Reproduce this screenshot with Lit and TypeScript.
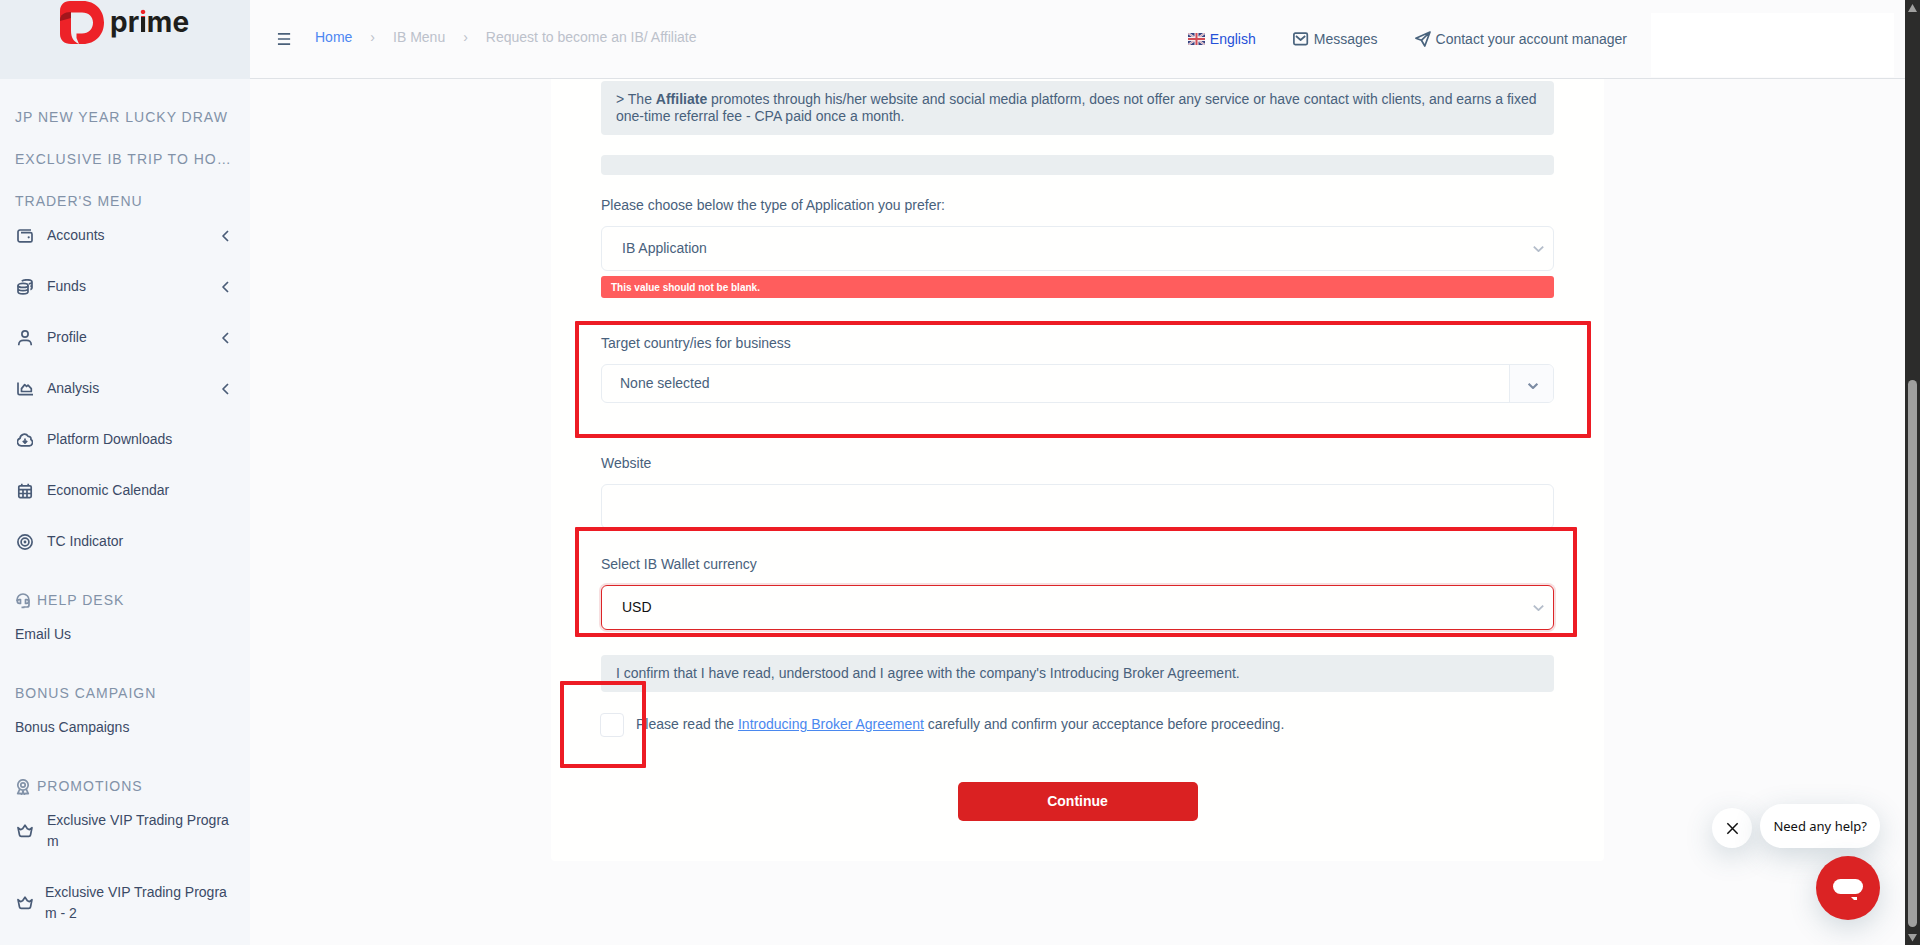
import { LitElement, html, css, svg, nothing } from "lit";
import { customElement, property, state } from "lit/decorators.js";
import { classMap } from "lit/directives/class-map.js";

const ICONS: Record<string, unknown> = {
  wallet: svg`<path d="M14 2H3A1.900 1.900 0 0 0 1 4v8a1.900 1.900 0 0 0 2 1.900h10.500a1.500 1.500 0 0 0 1.500-1.500V6.200a1.500 1.500 0 0 0-1.500-1.500H4"/><circle cx="11.700" cy="9.300" r="1.100" fill="currentColor" stroke="none"/>`,
  coins: svg`<ellipse cx="6" cy="6.400" rx="5" ry="2"/><path d="M1 6.400v6.400c0 1.200 2.200 2.100 5 2.100s5-.9 5-2.100V6.400M1 9.600c0 1.200 2.200 2.100 5 2.100s5-.9 5-2.100M4.800 2.200C5.600 1.300 7.700.8 10 .8c2.800 0 5 .9 5 2.100v6.200c0 .6-.6 1.100-1.600 1.500M15 3c0 .9-1.300 1.600-3.200 1.900M15 6.100c0 .6-.6 1.100-1.600 1.500"/>`,
  user: svg`<circle cx="8" cy="4" r="3.100"/><path d="M1.800 15.300v-.8c0-2.600 2-4.200 4.400-4.200h3.600c2.400 0 4.400 1.600 4.400 4.200v.8"/>`,
  chart: svg`<path d="M1 1.500v10.700c0 1 .5 1.500 1.500 1.500h13.500M4.500 10.500V7.600l3.200-4 1.900 1.900 1.400-1.300 3.300 3.400v2.900z"/>`,
  cloud: svg`<path d="M4.200 13.800h8.200a3.400 3.400 0 0 0 1.500-6.300 2.600 2.600 0 0 0-2.800-3.200A4.400 4.400 0 0 0 3 6.400a3.800 3.800 0 0 0 1.200 7.400z"/><path d="M8 6.500v4.500M5.800 8.900 8 11.100l2.200-2.200"/>`,
  calendar: svg`<rect x="1.800" y="2.800" width="12.400" height="11.800" rx="1.300"/><path d="M4.800.8v2M11.200.8v2M2 6.600h12M2 10.500h12M6 6.600v8M10 6.600v8"/>`,
  target: svg`<circle cx="8" cy="8" r="7.100"/><circle cx="8" cy="8" r="3.900"/><circle cx="8" cy="8" r="1.400" fill="currentColor" stroke="none"/>`,
  crown: svg`<path d="M1 4.700l2.600 1.900 2-.8L8 2.200l2.400 3.600 2 .8L15 4.700 13.500 12a1.800 1.800 0 0 1-1.700 1.400H4.200A1.800 1.800 0 0 1 2.500 12z"/>`,
  headset: svg`<path d="M2 8.200V7a6 6 0 0 1 12 0v5a2 2 0 0 1-2 2H8.500"/><path d="M5.500 6.600H4.300a1.900 1.900 0 0 0 0 3.800h1.200zM10.500 6.600h1.200a1.900 1.900 0 0 1 0 3.800h-1.200zM6.500 14.300h3"/>`,
  award: svg`<circle cx="8" cy="6" r="5.200"/><circle cx="8" cy="6" r="2.200"/><path d="M4.800 10.200 2.700 14.600l2.600-.3L6.800 15.500 8 12l1.200 3.500 1.500-1.200 2.600.3-2.100-4.400"/>`,
  menu: svg`<path d="M1 2.500h13M1 8h13M1 13.500h13"/>`,
  mail: svg`<rect x=".9" y="2.200" width="13.400" height="11.400" rx="1.300"/><path d="M3 5l4.600 4L12.200 5"/>`,
  plane: svg`<path d="M15 1 .9 7.200 6.400 9.300 9.800 15zM15 1 6.400 9.300"/>`,
  left: svg`<path d="M11 3 6 8l5 5"/>`,
  down: svg`<path d="M3 5.500l5 4.700 5-4.700"/>`,
  close: svg`<path d="M2.500 2.500l11 11M13.500 2.500l-11 11"/>`,
};

@customElement("ui-icon")
class UiIcon extends LitElement {
  static styles = css`
    :host { display: inline-flex; flex: none; width: 16px; height: 16px; }
    svg { width: 100%; height: 100%; fill: none; stroke: currentColor; stroke-width: var(--stroke, 1.7); stroke-linejoin: round; }
  `;
  @property() name = "";
  render() {
    return html`<svg viewBox="0 0 16 16" aria-hidden="true">${ICONS[this.name]}</svg>`;
  }
}

type Item = { label: string; icon?: string; sub?: boolean; tight?: boolean };
type Section = { title: string; icon?: string; items: Item[] };

const SECTIONS: Section[] = [
  { title: "JP NEW YEAR LUCKY DRAW", items: [] },
  { title: "EXCLUSIVE IB TRIP TO HO…", items: [] },
  {
    title: "TRADER'S MENU",
    items: [
      { label: "Accounts", icon: "wallet", sub: true },
      { label: "Funds", icon: "coins", sub: true },
      { label: "Profile", icon: "user", sub: true },
      { label: "Analysis", icon: "chart", sub: true },
      { label: "Platform Downloads", icon: "cloud" },
      { label: "Economic Calendar", icon: "calendar" },
      { label: "TC Indicator", icon: "target" },
    ],
  },
  { title: "HELP DESK", icon: "headset", items: [{ label: "Email Us" }] },
  { title: "BONUS CAMPAIGN", items: [{ label: "Bonus Campaigns" }] },
  {
    title: "PROMOTIONS",
    icon: "award",
    items: [
      { label: "Exclusive VIP Trading Program", icon: "crown" },
      { label: "Exclusive VIP Trading Program - 2", icon: "crown", tight: true },
    ],
  },
];

@customElement("side-menu")
class SideMenu extends LitElement {
  static styles = css`
    :host { display: block; background: #f5f7fa; overflow: hidden; color: #3b4a66; }
    .brand { display: flex; gap: 6px; height: 79px; padding: 1px 0 0 60px; box-sizing: border-box; background: #e9eef3; text-decoration: none; }
    .mark { width: 44px; height: 43px; flex: none; }
    .word { font: 700 28px/42px Inter, "Liberation Sans", sans-serif; color: #1e1e1c; }
    .dot { color: transparent; background: linear-gradient(#ed2228 12px, #1e1e1c 12px); background-clip: text; -webkit-background-clip: text; }
    nav { padding: 7px 15px 0; }
    h2 { display: flex; align-items: center; gap: 6px; margin: 21px 0 0; font-size: 14px; line-height: 21px; font-weight: 400; letter-spacing: 1px; color: #8292a8; white-space: nowrap; }
    ul { list-style: none; margin: 0; padding: 0; }
    .link { display: flex; align-items: center; gap: 14px; padding: 13px 0 17px; font-size: 14px; line-height: 21px; color: inherit; text-decoration: none; word-break: break-all; }
    .iconic { padding-left: 2px; }
    .tight { gap: 12px; }
    .label { flex: 1; }
    .lead { color: #4a5c77; }
    .arrow { margin-right: 2px; color: #4a5c77; }
  `;
  render() {
    return html`
      <a class="brand" href="#">
        <svg class="mark" viewBox="0 0 44 43" aria-hidden="true">
          <path fill="#ed2228" fill-rule="evenodd" d="M10 0h13c12 0 21 9 21 21.500S35 43 23 43H11C4 43 0 39 0 33V10C0 4 4 0 10 0zM11 11.500v18c0 7 2.500 11 8 13.500l-2.500-6V32.500H22c6.500 0 11-4.500 11-10.800S28.500 11.500 22 11.500z"/>
          <path fill="#a3161c" d="M11 11v6L0 20v-1C0 14 4 11 11 11z"/>
        </svg>
        <span class="word">pr<span class="dot">i</span>me</span>
      </a>
      <nav>
        ${SECTIONS.map(
          (s) => html`
            <h2>${s.icon ? html`<ui-icon name=${s.icon}></ui-icon>` : nothing}${s.title}</h2>
            ${s.items.length
              ? html`<ul>
                  ${s.items.map(
                    (i) => html`<li>
                      <a class=${classMap({ link: true, iconic: !!i.icon, tight: !!i.tight })} href="#">
                        ${i.icon ? html`<ui-icon class="lead" name=${i.icon}></ui-icon>` : nothing}
                        <span class="label">${i.label}</span>
                        ${i.sub ? html`<ui-icon class="arrow" name="left"></ui-icon>` : nothing}
                      </a>
                    </li>`
                  )}
                </ul>`
              : nothing}
          `
        )}
      </nav>
    `;
  }
}

@customElement("top-bar")
class TopBar extends LitElement {
  static styles = css`
    :host { display: flex; align-items: center; height: 78px; padding: 0 11px 0 27px; border-bottom: 1px solid #dfe2e6; background: #fbfbfc; font-size: 14px; line-height: 21px; }
    .menu { display: flex; padding: 0; border: 0; background: none; color: #4a6079; }
    .menu ui-icon { width: 15px; }
    .crumbs { display: flex; gap: 18px; margin: 0 auto 0 23px; padding: 0 0 4px; list-style: none; color: #bcc1cb; white-space: nowrap; }
    a { text-decoration: none; }
    .home { color: #4d87f2; }
    .tools { display: flex; gap: 37px; margin-right: 24px; white-space: nowrap; }
    .tool { display: flex; align-items: center; gap: 5px; color: #49637d; }
    .lang { color: #2450d8; }
    .flag { width: 17px; height: 12px; }
    .profile { align-self: flex-end; width: 243px; height: 64px; margin-bottom: 1px; background: #fff; }
  `;
  render() {
    return html`
      <button class="menu" aria-label="Menu"><ui-icon name="menu"></ui-icon></button>
      <ol class="crumbs">
        <li><a class="home" href="#">Home</a></li>
        <li aria-hidden="true">›</li>
        <li>IB Menu</li>
        <li aria-hidden="true">›</li>
        <li>Request to become an IB/ Affiliate</li>
      </ol>
      <div class="tools">
        <a class="tool lang" href="#">
          <svg class="flag" viewBox="0 0 17 12" aria-hidden="true">
            <path fill="#35417f" d="M0 0h17v12H0z"/>
            <path stroke="#e4e3ee" stroke-width="2.200" d="M0 0l17 12M17 0L0 12"/>
            <path stroke="#c9707c" stroke-width=".6" d="M0 0l17 12M17 0L0 12"/>
            <path stroke="#f3eef2" stroke-width="4" d="M8.500 0v12M0 6h17"/>
            <path stroke="#d34d55" stroke-width="2" d="M8.500 0v12M0 6h17"/>
          </svg>English</a>
        <a class="tool" href="#"><ui-icon name="mail"></ui-icon>Messages</a>
        <a class="tool" href="#"><ui-icon name="plane"></ui-icon>Contact your account manager</a>
      </div>
      <div class="profile"></div>
    `;
  }
}

@customElement("ib-form")
class IbForm extends LitElement {
  static styles = css`
    :host { display: block; width: 100%; max-width: 1053px; box-sizing: border-box; padding: 2px 50px 40px; background: #fffffe; border-radius: 0 0 4px 4px; font-size: 14px; line-height: 21px; color: #48617c; }
    p { margin: 0; }
    .note { padding: 10px 15px; border-radius: 4px; background: #eaeef0; line-height: 17px; margin-bottom: 20px; }
    .group { position: relative; margin-bottom: 25px; }
    .failed { margin-bottom: 35px; }
    .wide { margin-bottom: 50px; }
    .caption { display: block; margin-bottom: 10px; }
    .box { position: relative; color: #b4bdca; }
    .field { display: block; width: 100%; height: 45px; box-sizing: border-box; padding: 0 20px; border: 1px solid #e8edf2; border-radius: 6px; background: transparent; font: inherit; color: #48617c; appearance: none; outline: none; }
    .focused { border-color: #dc2427; box-shadow: 0 0 0 2px #f7dfe0; color: #111; }
    .caret { position: absolute; right: 8px; top: 15px; width: 15px; --stroke: 2; }
    .error { margin-top: 5px; padding: 1px 10px 0; border-radius: 3px; background: #ff5d5d; color: #fff; font-size: 10px; line-height: 21px; font-weight: 700; }
    .multi { display: flex; align-items: stretch; width: 100%; height: 39px; padding: 0; border: 1px solid #e8edf2; border-radius: 6px; background: transparent; font: inherit; color: inherit; text-align: left; overflow: hidden; }
    .value { flex: 1; align-self: center; padding-left: 18px; }
    .toggle { display: flex; align-items: center; justify-content: center; width: 41px; padding: 5px 0 0 2px; border-left: 1px solid #e8edf2; background: #fafbfd; color: #7b8ba3; }
    .small { width: 14px; height: 14px; --stroke: 2.500; }
    .agree { position: relative; display: flex; gap: 12px; margin: 21px 0 45px -1px; }
    .check { appearance: none; width: 24px; height: 24px; margin: 0; border: 1px solid #e6eaf0; border-radius: 4px; background: #fff; }
    .agree label { padding-top: 1px; }
    .agree a { color: #4a88ef; }
    .submit { display: block; width: 240px; height: 39px; margin: 0 auto; border: 0; border-radius: 5px; background: #da2122; color: #fff; font: 700 14px/21px "Liberation Sans", Arial, sans-serif; }
    .frame { position: absolute; border: 4px solid #ed1c24; border-radius: 1px; pointer-events: none; z-index: 1; }
    .frame-country { inset: -12px -37px -35px -26px; }
    .frame-wallet { inset: -27px -23px -7px -26px; }
    .frame-check { left: -40px; top: -32px; width: 78px; height: 79px; }
    .agreement { margin: 0; }
  `;
  @state() accepted = false;
  render() {
    return html`
      <form @submit=${(e: Event) => e.preventDefault()}>
        <p class="note">&gt; The <b>Affiliate</b> promotes through his/her website and social media platform, does not offer any service or have contact with clients, and earns a fixed one-time referral fee - CPA paid once a month.</p>
        <p class="note"></p>
        <div class="group failed">
          <label class="caption" for="type">Please choose below the type of Application you prefer:</label>
          <div class="box">
            <select class="field" id="type"><option>IB Application</option></select>
            <ui-icon class="caret" name="down"></ui-icon>
          </div>
          <p class="error">This value should not be blank.</p>
        </div>
        <div class="group wide">
          <label class="caption" for="country">Target country/ies for business</label>
          <button class="multi" id="country" type="button" aria-haspopup="listbox">
            <span class="value">None selected</span>
            <span class="toggle"><ui-icon class="small" name="down"></ui-icon></span>
          </button>
          <div class="frame frame-country"></div>
        </div>
        <div class="group">
          <label class="caption" for="website">Website</label>
          <input class="field" id="website" type="text" />
        </div>
        <div class="group">
          <label class="caption" for="currency">Select IB Wallet currency</label>
          <div class="box">
            <select class="field focused" id="currency"><option>USD</option></select>
            <ui-icon class="caret" name="down"></ui-icon>
          </div>
          <div class="frame frame-wallet"></div>
        </div>
        <p class="note agreement">I confirm that I have read, understood and I agree with the company's Introducing Broker Agreement.</p>
        <div class="agree">
          <input class="check" id="accept" type="checkbox" .checked=${this.accepted} @change=${() => (this.accepted = !this.accepted)} />
          <label for="accept">Please read the <a href="#">Introducing Broker Agreement</a> carefully and confirm your acceptance before proceeding.</label>
          <div class="frame frame-check"></div>
        </div>
        <button class="submit">Continue</button>
      </form>
    `;
  }
}

@customElement("help-chat")
class HelpChat extends LitElement {
  static styles = css`
    :host { display: grid; grid-template-columns: auto auto; gap: 8px; justify-items: end; align-items: end; }
    button { display: flex; align-items: center; justify-content: center; padding: 0; border: 0; border-radius: 50%; box-shadow: 0 8px 28px rgba(60, 95, 115, 0.22); }
    .close { width: 40px; height: 40px; background: #fff; color: #111; --stroke: 1.600; }
    .close ui-icon { width: 15px; height: 15px; }
    .hint { box-sizing: border-box; height: 44px; padding: 0 13px; border-radius: 22px; background: #fff; color: #111; font: 13px/44px "Noto Sans", "Open Sans", sans-serif; box-shadow: 0 8px 28px rgba(60, 95, 115, 0.22); white-space: nowrap; }
    .open { grid-column: 1 / -1; width: 64px; height: 64px; background: #db2324; }
    .talk { width: 30px; height: 24px; }
  `;
  render() {
    return html`
      <button class="close" aria-label="Close"><ui-icon name="close"></ui-icon></button>
      <div class="hint">Need any help?</div>
      <button class="open" aria-label="Open chat">
        <svg class="talk" viewBox="0 0 30 24" aria-hidden="true"><rect width="30" height="15" y="3" rx="7.500" fill="#fff"/><path d="M18 21h6v6z" fill="#fff"/></svg>
      </button>
    `;
  }
}

@customElement("scroll-rail")
class ScrollRail extends LitElement {
  static styles = css`
    :host { display: flex; flex-direction: column; align-items: center; background: #2c2c2b; }
    .tip { width: 9px; height: 15px; fill: #a0a09f; }
    .before { flex: 365; }
    .thumb { flex: 547; width: 9px; border-radius: 5px; background: #a0a09f; }
    .after { flex: 3; }
  `;
  render() {
    return html`
      <svg class="tip" viewBox="0 0 9 15"><path d="M4.500 4 9 12H0z"/></svg>
      <div class="before"></div>
      <div class="thumb"></div>
      <div class="after"></div>
      <svg class="tip" viewBox="0 0 9 15"><path d="M4.500 11.500 9 4H0z"/></svg>
    `;
  }
}

@customElement("app-root")
class AppRoot extends LitElement {
  static styles = css`
    :host { display: grid; grid-template-columns: 250px 1fr 15px; height: 100vh; overflow: hidden; background: #fbfbfc; font-family: "Liberation Sans", Arial, sans-serif; }
    .page { position: relative; display: flex; flex-direction: column; min-width: 0; overflow: hidden; }
    main { display: flex; flex-direction: column; align-items: center; }
    help-chat { position: absolute; right: 25px; bottom: 25px; }
  `;
  render() {
    return html`
      <side-menu></side-menu>
      <div class="page">
        <top-bar></top-bar>
        <main><ib-form></ib-form></main>
        <help-chat></help-chat>
      </div>
      <scroll-rail></scroll-rail>
    `;
  }
}
